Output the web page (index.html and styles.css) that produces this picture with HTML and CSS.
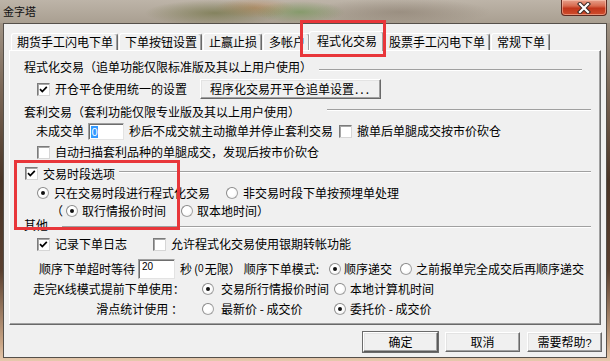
FILE: index.html
```html
<!DOCTYPE html>
<html lang="zh-CN">
<head>
<meta charset="utf-8">
<title>金字塔</title>
<link rel="stylesheet" href="styles.css">
</head>
<body>
<div class="window">
  <div class="titlebar">
    <span class="title">金字塔</span>
    <div class="close">
      <svg width="16" height="12" viewBox="0 0 16 12">
        <path d="M4 2 L12 10 M12 2 L4 10" stroke="#3b2a26" stroke-width="4.2" stroke-linecap="square"/>
        <path d="M4 2 L12 10 M12 2 L4 10" stroke="#ffffff" stroke-width="2.2" stroke-linecap="square"/>
      </svg>
    </div>
  </div>

  <div class="dialog">
    <div class="tabs">
      <div class="tab">期货手工闪电下单</div>
      <div class="tab">下单按钮设置</div>
      <div class="tab">止赢止损</div>
      <div class="tab">多帐户</div>
      <div class="tab active">程式化交易</div>
      <div class="tab">股票手工闪电下单</div>
      <div class="tab">常规下单</div>
    </div>

    <div class="panel">
      <div class="row h18">
        <span>程式化交易（追单功能仅限标准版及其以上用户使用）</span>
        <span class="sep sep-a"></span>
      </div>

      <div class="row h26 ind13">
        <span class="cb checked"><svg width="11" height="11" viewBox="0 0 11 11"><path d="M2 5.2 L4.3 7.6 L8.8 2.8" fill="none" stroke="#000" stroke-width="1.7"/></svg></span>
        <span class="lbl">开仓平仓使用统一的设置</span>
        <button class="btn btn-chase">程序化交易开平仓追单设置<span class="dots">...</span></button>
      </div>

      <div class="row h20">
        <span>套利交易（套利功能仅限专业版及其以上用户使用）</span>
        <span class="sep sep-c"></span>
      </div>

      <div class="row h18 ind12">
        <span>未成交单</span>
        <span class="field field-sec"><span class="sel">0</span></span>
        <span class="gap5">秒后不成交就主动撤单并停止套利交易</span>
        <span class="cb gap6"></span>
        <span class="lbl">撤单后单腿成交按市价砍仓</span>
      </div>

      <div class="row h24 ind13">
        <span class="cb"></span>
        <span class="lbl">自动扫描套利品种的单腿成交，发现后按市价砍仓</span>
      </div>

      <div class="row h19 ind1">
        <span class="cb checked"><svg width="11" height="11" viewBox="0 0 11 11"><path d="M2 5.2 L4.3 7.6 L8.8 2.8" fill="none" stroke="#000" stroke-width="1.7"/></svg></span>
        <span class="lbl">交易时段选项</span>
        <span class="sep sep-f"></span>
      </div>

      <div class="row h20 ind13">
        <span class="rb on"></span>
        <span class="lbl">只在交易时段进行程式化交易</span>
        <span class="rb gap16"></span>
        <span class="lbl">非交易时段下单按预埋单处理</span>
      </div>

      <div class="row h16 ind27">
        <span>（</span>
        <span class="rb on gap3"></span>
        <span class="lbl4">取行情报价时间</span>
        <span class="rb gap15"></span>
        <span class="lbl4">取本地时间）</span>
      </div>

      <div class="row h11">
        <span>其他</span>
        <span class="sep sep-i"></span>
      </div>

      <div class="row h28 ind13">
        <span class="cb checked"><svg width="11" height="11" viewBox="0 0 11 11"><path d="M2 5.2 L4.3 7.6 L8.8 2.8" fill="none" stroke="#000" stroke-width="1.7"/></svg></span>
        <span class="lbl">记录下单日志</span>
        <span class="cb gap26"></span>
        <span class="lbl">允许程式化交易使用银期转帐功能</span>
      </div>

      <div class="row h21 ind15">
        <span>顺序下单超时等待</span>
        <span class="field field-wait"><span class="num">20</span></span>
        <span class="gap5">秒</span>
        <span class="paren">(</span>
        <span class="zero">0</span>
        <span>无限）</span>
        <span class="gap3">顺序下单模式:</span>
        <span class="rb on gap10"></span>
        <span class="lbl3">顺序递交</span>
        <span class="rb gap8"></span>
        <span class="lbl4">之前报单完全成交后再顺序递交</span>
      </div>

      <div class="row h19 ind9">
        <span class="key">走完K线模式提前下单使用：</span>
        <span class="opt">
          <span class="rb on"></span>
          <span class="lbl7">交易所行情报价时间</span>
        </span>
        <span class="rb"></span>
        <span class="lbl4">本地计算机时间</span>
      </div>

      <div class="row h22 ind9">
        <span class="key">滑点统计使用 ：</span>
        <span class="opt">
          <span class="rb"></span>
          <span class="lbl7">最新价 - 成交价</span>
        </span>
        <span class="rb on"></span>
        <span class="lbl4">委托价 - 成交价</span>
      </div>
    </div>

    <div class="buttons">
      <button class="btn btn-dlg btn-default">确定</button>
      <button class="btn btn-dlg">取消</button>
      <button class="btn btn-dlg">需要帮助<span class="q">?</span></button>
    </div>
  </div>

  <div class="mark mark-tab"></div>
  <div class="mark mark-time"></div>
</div>
</body>
</html>
```

FILE: styles.css
```css
* {
  box-sizing: border-box;
}

html, body {
  margin: 0;
  padding: 0;
}

body {
  width: 610px;
  height: 361px;
  overflow: hidden;
  background: #f0f0f0;
  font-family: "Noto Sans CJK SC", "Noto Sans", sans-serif;
  font-size: 12px;
  color: #000;
}

.window {
  position: relative;
  width: 610px;
  height: 361px;
  display: flex;
  flex-direction: column;
  background: linear-gradient(to bottom, #aca294 0%, #7a6656 25%, #4a3527 50%, #5a4030 75%, #c9a585 95%, #e6c9ad 100%);
}

/* ---------- title bar ---------- */
.titlebar {
  height: 23px;
  flex: none;
  display: flex;
  justify-content: space-between;
  align-items: flex-start;
  padding-left: 3px;
  background:
    radial-gradient(ellipse 70px 13px at 215px 13px, rgba(95, 100, 45, 0.55), transparent),
    radial-gradient(ellipse 45px 11px at 300px 12px, rgba(90, 140, 60, 0.5), transparent),
    radial-gradient(ellipse 40px 10px at 255px 8px, rgba(190, 120, 60, 0.45), transparent),
    radial-gradient(ellipse 90px 14px at 400px 12px, rgba(110, 95, 80, 0.35), transparent),
    linear-gradient(to bottom, #bdb4a8, #a99f91);
}

.title {
  font-size: 11px;
  line-height: 22px;
  color: #101010;
}

.close {
  width: 46px;
  height: 16px;
  margin-right: 3px;
  display: flex;
  align-items: center;
  justify-content: center;
  border: 1px solid #5e2a20;
  border-top: none;
  border-radius: 0 0 4px 4px;
  background: linear-gradient(to bottom, #e6a08b 0%, #d86a4e 40%, #c1361b 55%, #cf4d2d 100%);
  box-shadow: inset 0 0 0 1px rgba(255, 210, 190, 0.5);
}

/* ---------- dialog ---------- */
.dialog {
  flex: none;
  height: 335px;
  margin: 0 3px;
  border: 1px solid #55504a;
  background: #f0f0f0;
  padding: 0 5px;
  display: flex;
  flex-direction: column;
}

.tabs {
  height: 26px;
  flex: none;
  display: flex;
  align-items: flex-end;
  padding-left: 2px;
}

.tab {
  height: 17px;
  padding: 1px 4px 0 5px;
  margin-right: 1px;
  line-height: 14px;
  white-space: nowrap;
  border: 1px solid;
  border-color: #ffffff #696969 transparent #ffffff;
  border-bottom: none;
  border-radius: 3px 3px 0 0;
  box-shadow: inset -1px 0 #a0a0a0;
  background: #f0f0f0;
}

.tab.active {
  position: relative;
  z-index: 1;
  height: 20px;
  padding: 2px 6px 0 7px;
  margin: 0 -1px -1px -2px;
}

.panel {
  height: 275px;
  flex: none;
  border: 1px solid;
  border-color: #ffffff #696969 #696969 #ffffff;
  box-shadow: inset -1px -1px #a0a0a0;
  padding: 7px 0 0 14px;
  display: flex;
  flex-direction: column;
}

/* ---------- rows ---------- */
.row {
  display: flex;
  align-items: center;
  line-height: 14px;
  white-space: nowrap;
  flex: none;
}

.h11 { height: 11px; }
.h16 { height: 16px; }
.h18 { height: 18px; }
.h19 { height: 19px; }
.h20 { height: 20px; }
.h21 { height: 21px; }
.h22 { height: 22px; }
.h24 { height: 24px; }
.h26 { height: 26px; }
.h28 { height: 28px; }

.ind1 { padding-left: 1px; }
.ind9 { padding-left: 9px; }
.ind12 { padding-left: 12px; }
.ind13 { padding-left: 13px; }
.ind15 { padding-left: 15px; }
.ind27 { padding-left: 27px; }

.gap3 { margin-left: 3px; }
.gap5 { margin-left: 5px; }
.gap6 { margin-left: 6px; }
.gap8 { margin-left: 8px; }
.gap10 { margin-left: 10px; }
.gap15 { margin-left: 15px; }
.gap16 { margin-left: 16px; }
.gap26 { margin-left: 26px; }

.lbl { margin-left: 5px; }
.lbl3 { margin-left: 3px; }
.lbl4 { margin-left: 4px; }
.lbl7 { margin-left: 7px; }

.sep {
  flex: 1;
  height: 2px;
  align-self: flex-start;
  border-top: 1px solid #a0a0a0;
  border-bottom: 1px solid #ffffff;
  margin-right: 9px;
}

.sep-a { margin-top: 11px; margin-left: 7px; margin-right: 18px; }
.sep-c { margin-top: 7px; margin-left: 27px; }
.sep-f { margin-top: 7px; margin-left: 4px; }
.sep-i { margin-top: 7px; margin-left: 14px; }

/* ---------- controls ---------- */
.cb {
  width: 13px;
  height: 13px;
  flex: none;
  display: flex;
  align-items: center;
  justify-content: center;
  background: #ffffff;
  border: 1px solid;
  border-color: #7b7b7b #d6d6d6 #d6d6d6 #7b7b7b;
  box-shadow: inset 1px 1px #a6a6a6;
}

.cb svg {
  display: block;
}

.rb {
  width: 12px;
  height: 12px;
  flex: none;
  border-radius: 50%;
  border: 1px solid #a3a3a3;
  border-top-color: #8a8a8a;
  border-left-color: #8a8a8a;
  background: radial-gradient(circle at 40% 40%, #ffffff 40%, #ececec 100%);
  display: flex;
  align-items: center;
  justify-content: center;
}

.rb.on::after {
  content: "";
  width: 4px;
  height: 4px;
  border-radius: 50%;
  background: #111;
}

.field {
  flex: none;
  background: #ffffff;
  border: 1px solid;
  border-color: #a0a0a0 #e3e3e3 #e3e3e3 #a0a0a0;
  box-shadow: inset 1px 1px #6e6e6e;
  display: flex;
}

.field-sec {
  width: 36px;
  height: 17px;
  margin-left: 4px;
  padding: 2px 0 1px 2px;
}

.sel {
  background: #3399ff;
  color: #fff;
  font-family: "Liberation Sans", Arial, sans-serif;
  font-size: 11px;
  line-height: 12px;
  width: 7px;
  text-align: center;
}

.field-wait {
  width: 37px;
  height: 20px;
  margin-left: 3px;
  padding: 1px 0 0 3px;
}

.num {
  font-family: "Liberation Sans", Arial, sans-serif;
  font-size: 10px;
  line-height: 12px;
}

.paren {
  margin-left: 2px;
}

.zero {
  font-family: "Liberation Sans", Arial, sans-serif;
  font-size: 10px;
  margin-right: 1px;
}

.key {
  width: 150px;
  text-align: right;
}

.opt {
  width: 132px;
  margin-left: 19px;
  display: flex;
  align-items: center;
}

.btn {
  font-family: inherit;
  font-size: 12px;
  color: #000;
  background: #f0f0f0;
  border: 1px solid;
  border-color: #ffffff #696969 #696969 #ffffff;
  box-shadow: inset -1px -1px #a0a0a0, inset 1px 1px #e3e3e3;
  padding: 0;
  line-height: 14px;
  white-space: nowrap;
}

.btn-chase {
  width: 181px;
  height: 20px;
  margin-left: 13px;
}

.dots {
  letter-spacing: 2px;
  margin-left: 1px;
}

.buttons {
  flex: none;
  display: flex;
  justify-content: flex-end;
  gap: 7px;
  margin-top: 7px;
  margin-right: -1px;
}

.btn-dlg {
  width: 75px;
  height: 20px;
}

.btn-default {
  border-color: #ffffff #5a5a5a #5a5a5a #ffffff;
  outline: 1px solid #6b6b6b;
  outline-offset: 0;
}

.q {
  font-family: "Liberation Sans", Arial, sans-serif;
  font-size: 11px;
}

/* ---------- red annotation frames ---------- */
.mark {
  position: absolute;
  z-index: 5;
  border: 3px solid #e8363a;
}

.mark-tab {
  left: 300px;
  top: 20px;
  width: 86px;
  height: 37px;
}

.mark-time {
  left: 14px;
  top: 160px;
  width: 166px;
  height: 70px;
}
```
